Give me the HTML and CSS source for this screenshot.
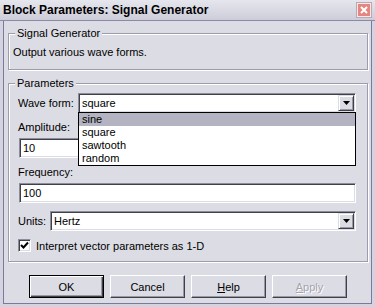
FILE: index.html
```html
<!DOCTYPE html>
<html lang="en">
<head>
  <meta charset="UTF-8" />
  <title>Block Parameters: Signal Generator</title>
  <link rel="stylesheet" href="styles.css">
</head>
<body>

  <div class="window">
    <div class="titlebar">
      <span class="title">Block Parameters: Signal Generator</span>
      <span class="close">
        <svg width="8" height="8" viewBox="0 0 8 8"><path d="M1 1 L7 7 M7 1 L1 7" stroke="#fff" stroke-width="2" /></svg>
      </span>
    </div>

    <div class="client">
      <fieldset class="group group-desc">
        <legend>Signal Generator</legend>
        <p class="desc">Output various wave forms.</p>
      </fieldset>

      <fieldset class="group group-params">
        <legend>Parameters</legend>
        <div class="params">
          <div class="row">
            <span class="row-label label-wave">Wave form:</span>
            <div class="combo combo-wave">
              <span class="combo-value">square</span>
              <span class="combo-btn"><svg width="7" height="4" viewBox="0 0 7 4"><path d="M0 0 H7 L3.5 4 Z" fill="#000" /></svg></span>
              <ul class="dropdown">
                <li class="selected">sine</li>
                <li>square</li>
                <li>sawtooth</li>
                <li>random</li>
              </ul>
            </div>
          </div>

          <div class="field-label">Amplitude:</div>
          <div class="textbox">10</div>

          <div class="field-label">Frequency:</div>
          <div class="textbox">100</div>

          <div class="row row-units">
            <span class="row-label label-units">Units:</span>
            <div class="combo">
              <span class="combo-value">Hertz</span>
              <span class="combo-btn"><svg width="7" height="4" viewBox="0 0 7 4"><path d="M0 0 H7 L3.5 4 Z" fill="#000" /></svg></span>
            </div>
          </div>

          <div class="check-row">
            <span class="checkbox">
              <svg width="9" height="9" viewBox="0 0 9 9"><path d="M1 4 L3.5 6.5 L8 1.5" stroke="#000" stroke-width="2" fill="none" /></svg>
            </span>
            <span>Interpret vector parameters as 1-D</span>
          </div>
        </div>
      </fieldset>

      <div class="buttons">
        <button class="btn btn-default">OK</button>
        <button class="btn">Cancel</button>
        <button class="btn"><u>H</u>elp</button>
        <button class="btn btn-disabled"><u>A</u>pply</button>
      </div>
    </div>
  </div>

</body>
</html>
```

FILE: styles.css
```css
body {
  margin: 0;
  padding: 0;
  background-color: #dcdce4;
  font-family: "Liberation Sans", Arial, sans-serif;
  font-size: 11px;
  color: #000;
}

.window {
  width: 375px;
  height: 307px;
  display: flex;
  flex-direction: column;
}

.titlebar {
  height: 20px;
  border-bottom: 1px solid #8a8aa6;
  background: linear-gradient(#e6e6ee, #cdcdda);
  display: flex;
  align-items: center;
  justify-content: space-between;
  padding: 0 4px 0 3px;
}

.title {
  font-weight: bold;
  font-size: 12px;
}

.close {
  width: 12px;
  height: 12px;
  background-color: #e5857f;
  border: 1px solid #fbe8e6;
  box-shadow: 0 0 0 1px #b9a8b4;
  display: flex;
  align-items: center;
  justify-content: center;
}

.client {
  flex: 1;
  background-color: #dcdce4;
  border: 3px solid #d4d4e0;
  border-top: 0;
  box-shadow: inset 1px 0 #7a7a9c, inset -1px 0 #7a7a9c, inset 0 -1px #7a7a9c;
  padding: 0 4px 0 5px;
  display: flex;
  flex-direction: column;
}

.group {
  margin: 0;
  padding: 0;
  min-width: 0;
  border: 1px solid #9c9cac;
  box-shadow: inset 1px 1px #fff, 1px 1px #fff;
}

.group legend {
  margin-left: 6px;
  padding: 0 2px;
  line-height: 13px;
  background-color: #dcdce4;
}

.group-desc {
  margin-top: 6px;
}

.desc {
  margin: 6px 0 10px 4px;
  line-height: 13px;
}

.group-params {
  margin-top: 7px;
}

.params {
  padding: 3px 11px 9px 9px;
}

.row {
  display: flex;
  align-items: center;
  height: 20px;
}

.row-label {
  line-height: 13px;
}

.label-wave {
  width: 60px;
}

.label-units {
  width: 32px;
}

.row-units {
  margin-top: 8px;
}

.combo {
  flex: 1;
  height: 20px;
  box-sizing: border-box;
  position: relative;
  background: #fff;
  border: 1px solid;
  border-color: #8c8c9c #fff #fff #8c8c9c;
  box-shadow: inset 1px 1px #404048, inset -1px -1px #dcdce4;
  display: flex;
  align-items: center;
  padding: 0 1px 0 3px;
}

.combo-value {
  flex: 1;
  line-height: 13px;
}

.combo-btn {
  width: 16px;
  height: 16px;
  box-sizing: border-box;
  background-color: #dcdce4;
  border: 1px solid;
  border-color: #dcdce4 #404048 #404048 #dcdce4;
  box-shadow: inset 1px 1px #fff, inset -1px -1px #9898a8;
  display: flex;
  align-items: center;
  justify-content: center;
}

.dropdown {
  position: absolute;
  top: 18px;
  left: -1px;
  right: -1px;
  margin: 0;
  padding: 0;
  list-style: none;
  background: #fff;
  border: 1px solid #000;
  z-index: 2;
}

.dropdown li {
  height: 13px;
  line-height: 13px;
  padding-left: 3px;
}

.dropdown li.selected {
  background-color: #b3b3c1;
}

.field-label {
  margin-top: 8px;
  line-height: 13px;
}

.textbox {
  margin: 4px 0 0 1px;
  height: 20px;
  box-sizing: border-box;
  background: #fff;
  border: 1px solid;
  border-color: #8c8c9c #fff #fff #8c8c9c;
  box-shadow: inset 1px 1px #404048, inset -1px -1px #dcdce4;
  padding: 0 3px;
  line-height: 18px;
}

.check-row {
  margin-top: 8px;
  display: flex;
  align-items: center;
  gap: 5px;
  height: 13px;
}

.checkbox {
  width: 13px;
  height: 13px;
  box-sizing: border-box;
  background: #fff;
  border: 1px solid;
  border-color: #8c8c9c #fff #fff #8c8c9c;
  box-shadow: inset 1px 1px #404048, inset -1px -1px #dcdce4;
  display: flex;
  align-items: center;
  justify-content: center;
}

.buttons {
  margin-top: 13px;
  display: flex;
  justify-content: center;
  gap: 6px;
}

.btn {
  width: 75px;
  height: 23px;
  padding: 0;
  font-family: "Liberation Sans", Arial, sans-serif;
  font-size: 11px;
  color: #000;
  background-color: #dcdce4;
  border: 1px solid;
  border-color: #fff #404048 #404048 #fff;
  box-shadow: inset -1px -1px #9898a8;
}

.btn-default {
  border-color: #000;
  box-shadow: inset 1px 1px #fff, inset -1px -1px #404048, inset -2px -2px #9898a8;
}

.btn-disabled {
  color: #a4a4b0;
  text-shadow: 1px 1px #fff;
}
```
